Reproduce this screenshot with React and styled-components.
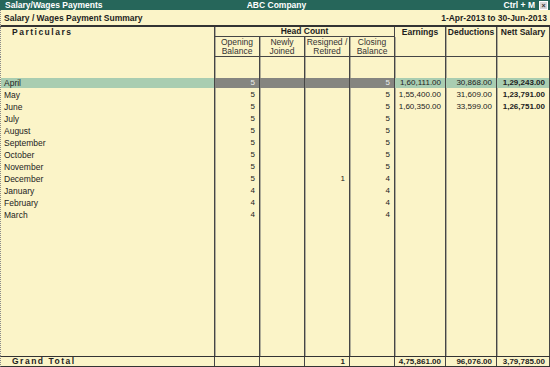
import React from 'react'
import styled, { createGlobalStyle } from 'styled-components'

const GlobalStyle = createGlobalStyle`
  html, body {
    margin: 0;
    padding: 0;
  }
  body {
    font-family: 'Liberation Sans', Arial, sans-serif;
    font-size: 8.5px;
    color: #1e1e1e;
  }
`

const WIDTHS = [215, 45, 45, 45, 45, 51, 51, 53]
const LINE = '#454545'

const Screen = styled.div`
  width: 550px;
  height: 367px;
  background: #fbf4c8;
  display: flex;
  flex-direction: column;
  overflow: hidden;
`

const TitleBar = styled.div`
  height: 10px;
  background: #26665a;
  color: #fff;
  font-weight: bold;
  display: grid;
  grid-template-columns: 1fr auto 1fr;
  align-items: center;
  padding: 0 2px 0 5px;
  line-height: 10px;
`

const TitleRight = styled.div`
  display: flex;
  justify-content: flex-end;
  align-items: center;
  gap: 4px;
`

const CloseBox = styled.span`
  width: 7px;
  height: 7px;
  background: #d8d8d8;
  border: 1px solid #fff;
  color: #333;
  font-size: 7px;
  line-height: 7px;
  text-align: center;
  font-weight: bold;
`

const SubTitle = styled.div`
  height: 15px;
  display: flex;
  justify-content: space-between;
  align-items: center;
  padding: 0 3px;
  font-weight: bold;
  border-bottom: 2px solid #333;
  border-left: 1px dotted #8a8a8a;
`

const HeaderRow = styled.div`
  height: 30px;
  display: flex;
  border-left: 1px dotted #8a8a8a;
`

const HeadCell = styled.div`
  width: ${p => p.$w}px;
  box-sizing: border-box;
  border-right: 1px solid ${LINE};
  box-shadow: 1px 0 0 #b0ad98;
  ${p => p.$line && `border-bottom: 1px solid ${LINE};`}
  font-weight: bold;
  text-align: center;
  padding-top: 1px;
  line-height: 9px;
`

const ParticularsHead = styled(HeadCell)`
  text-align: left;
  padding-left: 11px;
  letter-spacing: 1.5px;
`

const Group = styled.div`
  width: ${p => p.$w}px;
  display: flex;
  flex-direction: column;
`

const GroupTitle = styled.div`
  height: 10px;
  box-sizing: border-box;
  border-bottom: 1px solid ${LINE};
  border-right: 1px solid ${LINE};
  font-weight: bold;
  text-align: center;
  line-height: 9px;
`

const SubRow = styled.div`
  display: flex;
  flex: 1;
`

const SubHead = styled.div`
  width: ${p => p.$w}px;
  box-sizing: border-box;
  border-right: 1px solid ${LINE};
  box-shadow: 1px 0 0 #b0ad98;
  border-bottom: 1px solid ${LINE};
  text-align: center;
  line-height: 9px;
  padding-top: 1px;
  color: #333;
`

const Body = styled.div`
  flex: 1;
  display: flex;
  border-left: 1px dotted #8a8a8a;
`

const Col = styled.div`
  width: ${p => p.$w}px;
  box-sizing: border-box;
  border-right: 1px solid ${LINE};
  box-shadow: 1px 0 0 #b0ad98;
  padding-top: 21px;
  display: flex;
  flex-direction: column;
  gap: 2px;
`

const Cell = styled.div`
  height: 10px;
  line-height: 10px;
  padding: ${p => (p.$left ? '0 0 0 3px' : '0 4px 0 0')};
  text-align: ${p => (p.$left ? 'left' : 'right')};
  font-size: ${p => (p.$left ? '8.5px' : '8px')};
  font-weight: ${p => (p.$bold ? 'bold' : 'normal')};
  background: ${p =>
    p.$hl === 'green' ? '#a9cdb1' : p.$hl === 'grey' ? '#858580' : 'transparent'};
  color: ${p => (p.$hl === 'grey' ? '#eee' : '#222')};
  white-space: nowrap;
`

const TotalRow = styled.div`
  height: 11px;
  box-sizing: border-box;
  display: flex;
  border-top: 1px solid #333;
  border-bottom: 1px solid #333;
  border-left: 1px dotted #8a8a8a;
`

const TotalCell = styled.div`
  width: ${p => p.$w}px;
  box-sizing: border-box;
  border-right: 1px solid ${LINE};
  font-weight: bold;
  font-size: 8px;
  line-height: 9px;
  text-align: right;
  padding-right: 4px;
`

const TotalLabel = styled(TotalCell)`
  font-size: 8.5px;
  text-align: left;
  padding-left: 11px;
  letter-spacing: 1.5px;
`

const months = [
  ['April', 5, '', '', 5, '1,60,111.00', '30,868.00', '1,29,243.00'],
  ['May', 5, '', '', 5, '1,55,400.00', '31,609.00', '1,23,791.00'],
  ['June', 5, '', '', 5, '1,60,350.00', '33,599.00', '1,26,751.00'],
  ['July', 5, '', '', 5, '', '', ''],
  ['August', 5, '', '', 5, '', '', ''],
  ['September', 5, '', '', 5, '', '', ''],
  ['October', 5, '', '', 5, '', '', ''],
  ['November', 5, '', '', 5, '', '', ''],
  ['December', 5, '', 1, 4, '', '', ''],
  ['January', 4, '', '', 4, '', '', ''],
  ['February', 4, '', '', 4, '', '', ''],
  ['March', 4, '', '', 4, '', '', '']
]

const totals = ['Grand Total', '', '', '1', '', '4,75,861.00', '96,076.00', '3,79,785.00']

export default function App() {
  // first row is the selected line: green except the head count block
  const hlFor = (ci, ri) => {
    if (ri !== 0) return null
    return ci >= 1 && ci <= 4 ? 'grey' : 'green'
  }

  return (
    <>
      <GlobalStyle />
      <Screen>
        <TitleBar>
          <span>Salary/Wages Payments</span>
          <span>ABC Company</span>
          <TitleRight>
            <span>Ctrl + M</span>
            <CloseBox>×</CloseBox>
          </TitleRight>
        </TitleBar>
        <SubTitle>
          <span>Salary / Wages Payment Summary</span>
          <span>1-Apr-2013 to 30-Jun-2013</span>
        </SubTitle>
        <HeaderRow>
          <ParticularsHead $w={WIDTHS[0] - 1}>Particulars</ParticularsHead>
          <Group $w={180}>
            <GroupTitle>Head Count</GroupTitle>
            <SubRow>
              <SubHead $w={45}>Opening<br />Balance</SubHead>
              <SubHead $w={45}>Newly<br />Joined</SubHead>
              <SubHead $w={45}>Resigned /<br />Retired</SubHead>
              <SubHead $w={45}>Closing<br />Balance</SubHead>
            </SubRow>
          </Group>
          <HeadCell $w={WIDTHS[5]} $line>Earnings</HeadCell>
          <HeadCell $w={WIDTHS[6]} $line>Deductions</HeadCell>
          <HeadCell $w={WIDTHS[7]} $line>Nett Salary</HeadCell>
        </HeaderRow>
        <Body>
          {WIDTHS.map((w, ci) => (
            <Col key={ci} $w={ci === 0 ? w - 1 : w}>
              {months.map((row, ri) => (
                <Cell key={ri} $left={ci === 0} $bold={ci === 7} $hl={hlFor(ci, ri)}>
                  {row[ci]}
                </Cell>
              ))}
            </Col>
          ))}
        </Body>
        <TotalRow>
          {totals.map((t, ci) =>
            ci === 0 ? (
              <TotalLabel key={ci} $w={WIDTHS[0] - 1}>{t}</TotalLabel>
            ) : (
              <TotalCell key={ci} $w={WIDTHS[ci]}>{t}</TotalCell>
            )
          )}
        </TotalRow>
      </Screen>
    </>
  )
}
